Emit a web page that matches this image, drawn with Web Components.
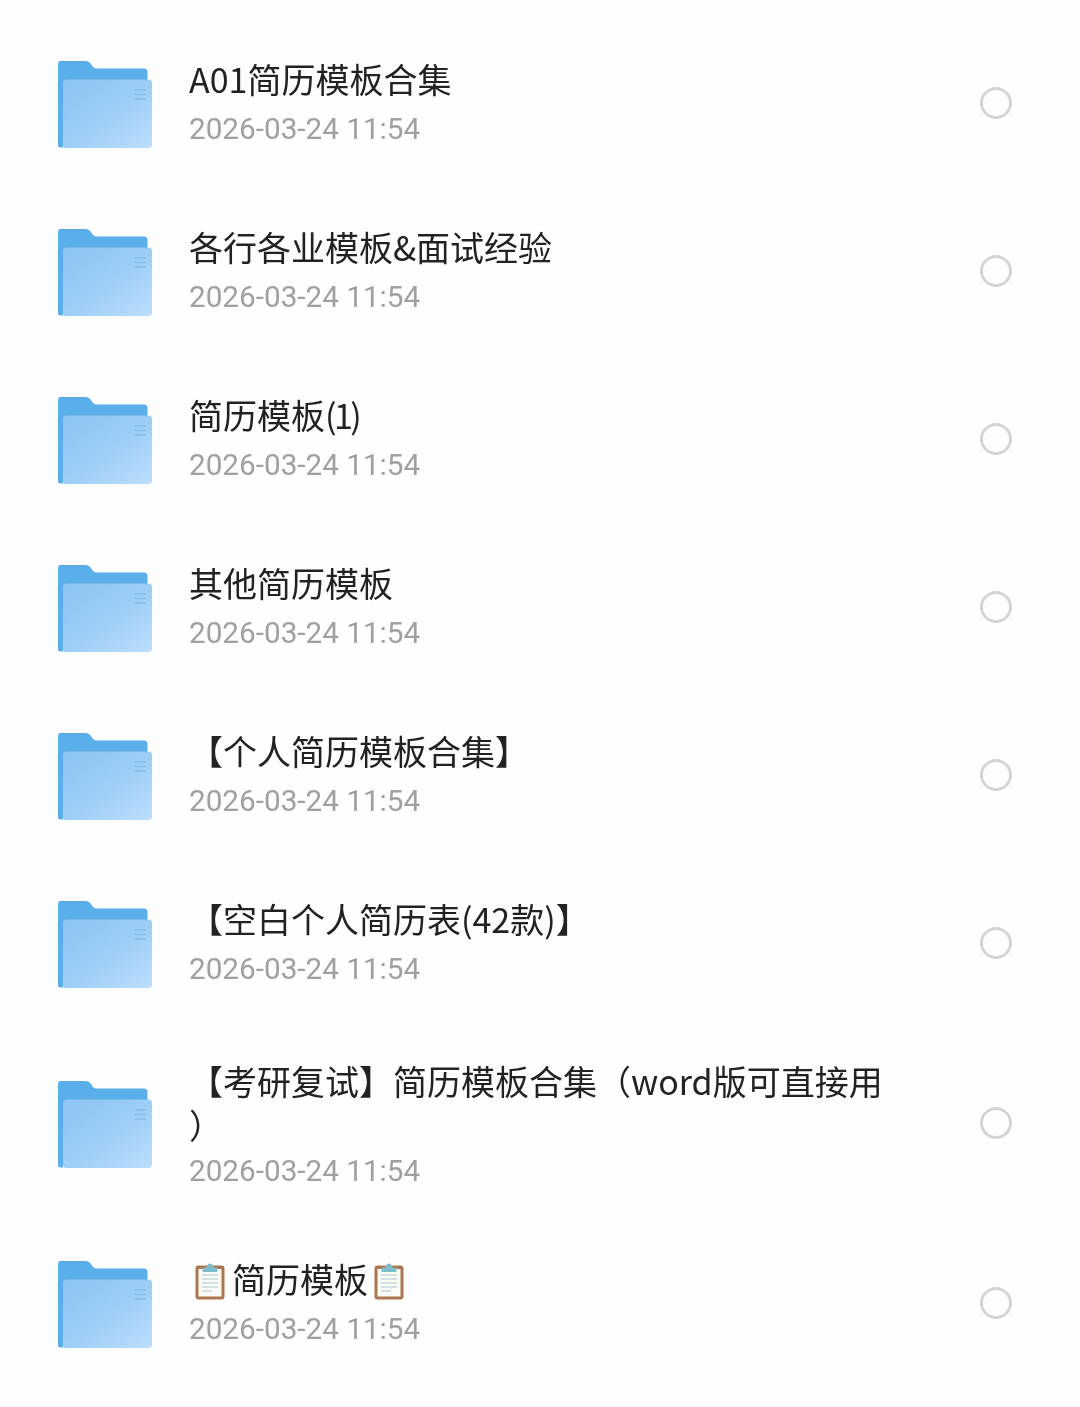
<!DOCTYPE html>
<html lang="zh-CN">
<head>
<meta charset="utf-8">
<title>简历模板</title>
<style>
  body { margin: 0; background: #fefefe; }
  .tight { letter-spacing: -2.5px; }
</style>
</head>
<body>
<file-list>
  <file-row date="2026-03-24 11:54">A01简历模板合集</file-row>
  <file-row date="2026-03-24 11:54">各行各业模板&amp;面试经验</file-row>
  <file-row date="2026-03-24 11:54">简历模板<span class="tight">(1)</span></file-row>
  <file-row date="2026-03-24 11:54">其他简历模板</file-row>
  <file-row date="2026-03-24 11:54">【个人简历模板合集】</file-row>
  <file-row date="2026-03-24 11:54">【空白个人简历表(42款)】</file-row>
  <file-row date="2026-03-24 11:54" wrapped>【考研复试】简历模板合集（word版可直接用<br>）</file-row>
  <file-row date="2026-03-24 11:54"><clipboard-icon></clipboard-icon>简历模板<clipboard-icon></clipboard-icon></file-row>
</file-list>

<script>
/**
 * @class FolderIcon
 * @description Blue folder with a lighter front panel
 */
class FolderIcon extends HTMLElement {
  constructor() {
    super();
    this.attachShadow({ mode: 'open' });
    this.shadowRoot.innerHTML = `
      <style>
        :host { display: block; width: 96px; height: 88px; margin-top: 4px; }
        svg { display: block; }
      </style>
      <svg width="96" height="88" viewBox="0 0 96 88">
        <defs>
          <linearGradient id="front" x1="0.1" y1="0.1" x2="0.9" y2="0.95">
            <stop offset="0" stop-color="#8fc5f2"/>
            <stop offset="0.55" stop-color="#9fcff6"/>
            <stop offset="1" stop-color="#b7dcfc"/>
          </linearGradient>
        </defs>
        <path d="M3.500 0H28Q32 0 34 3L36 6Q37.500 7.500 40 7.500H87Q90.500 7.500 90.500 11V30H6V86.500H3.500Q1 86.500 1 84V3Q1 0 3.500 0Z" fill="#5aaeea"/>
        <path d="M9.500 18.500H91Q95 18.500 95 22V83Q95 87 91 87H9.500Q6 87 6 83V22Q6 18.500 9.500 18.500Z" fill="url(#front)"/>
        <path d="M78 29H89M78 33.500H89M78 38H89" stroke="#86bce8" stroke-width="1.300" fill="none"/>
      </svg>
    `;
  }
}

/**
 * @class ClipboardIcon
 * @description Clipboard emoji drawn inline with the title text
 */
class ClipboardIcon extends HTMLElement {
  constructor() {
    super();
    this.attachShadow({ mode: 'open' });
    this.shadowRoot.innerHTML = `
      <style>
        :host { display: inline-block; width: 43px; height: 38px; vertical-align: -8px; }
        svg { display: block; margin-left: 5px; }
      </style>
      <svg width="32" height="38" viewBox="0 0 32 38">
        <rect x="1.500" y="2.500" width="29" height="34" rx="3" fill="#ad764e"/>
        <rect x="4.500" y="6" width="23" height="27.500" fill="#fbfbf6"/>
        <path d="M8 12H24M8 16H24M8 20H24M8 24H24M8 28H18" stroke="#c3d8e0" stroke-width="1.300" fill="none"/>
        <path d="M8.500 8V4.500H12.500Q13.500 0.500 16 0.500T19.500 4.500H23.500V8Q23.500 9 22.500 9H9.500Q8.500 9 8.500 8Z" fill="#7dbdca"/>
      </svg>
    `;
  }
}

/**
 * @class RadioMark
 * @description Empty round selection mark
 */
class RadioMark extends HTMLElement {
  constructor() {
    super();
    this.attachShadow({ mode: 'open' });
    this.shadowRoot.innerHTML = `
      <style>
        :host {
          display: block;
          box-sizing: border-box;
          width: 32px;
          height: 32px;
          border: 3px solid #d4d4d4;
          border-radius: 50%;
        }
      </style>
    `;
  }
}

/**
 * @class FileRow
 * @description One folder row: icon, title in the slot, date attribute, radio mark
 */
class FileRow extends HTMLElement {
  constructor() {
    super();
    this.attachShadow({ mode: 'open' });
    this.shadowRoot.innerHTML = `
      <style>
        :host {
          display: flex;
          align-items: center;
          box-sizing: border-box;
          min-height: 168px;
          padding: 28px 68px 28px 57px;
        }
        :host([wrapped]) {
          padding-top: 26px;
          padding-bottom: 26px;
        }
        .text {
          flex: 1;
          min-width: 0;
          margin-left: 36px;
        }
        :host([wrapped]) .text {
          margin-top: 4px;
        }
        .title {
          min-height: 48px;
          padding-top: 2px;
          font: 400 34px/44px "Noto Sans CJK SC", sans-serif;
          color: #222;
        }
        .date {
          margin-top: 2px;
          font: 400 29.700px/44px Roboto, sans-serif;
          color: #a0a0a0;
        }
      </style>
      <folder-icon></folder-icon>
      <div class="text">
        <div class="title"><slot></slot></div>
        <div class="date"></div>
      </div>
      <radio-mark></radio-mark>
    `;
  }

  /**
   * Fills the date line when the element is inserted.
   * @returns {void}
   */
  connectedCallback() {
    this.shadowRoot.querySelector('.date').textContent = this.getAttribute('date');
  }
}

/**
 * @class FileList
 * @description Vertical list of rows
 */
class FileList extends HTMLElement {
  constructor() {
    super();
    this.attachShadow({ mode: 'open' });
    this.shadowRoot.innerHTML = `
      <style>
        :host { display: block; padding-top: 19px; filter: blur(0.4px); }
      </style>
      <slot></slot>
    `;
  }
}

customElements.define('folder-icon', FolderIcon);
customElements.define('clipboard-icon', ClipboardIcon);
customElements.define('radio-mark', RadioMark);
customElements.define('file-row', FileRow);
customElements.define('file-list', FileList);
</script>
</body>
</html>
